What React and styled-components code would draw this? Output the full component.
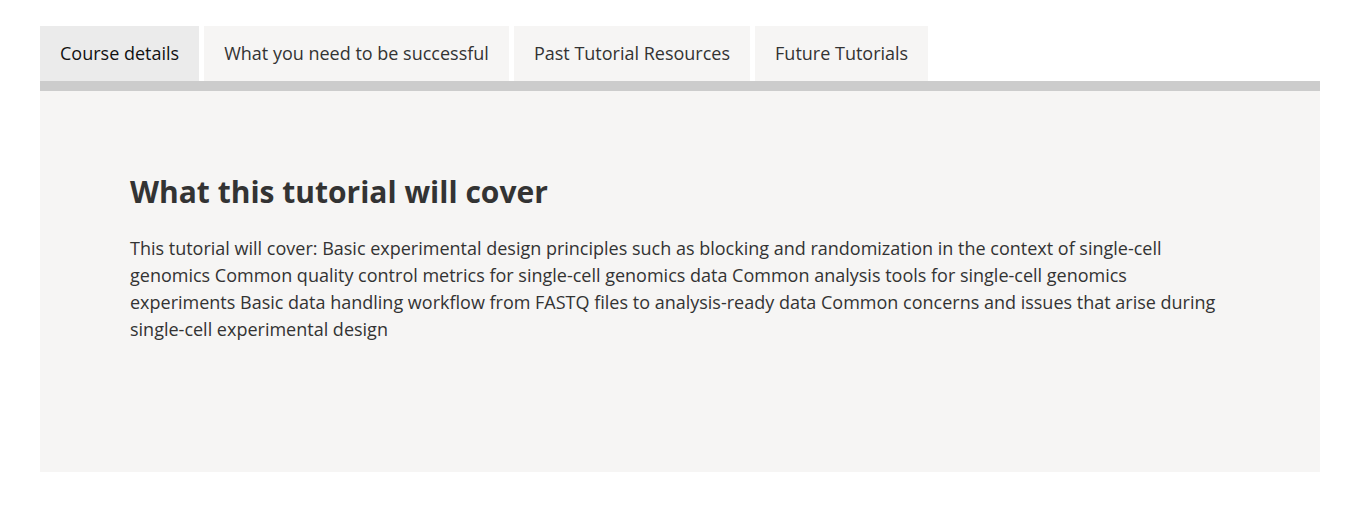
import React, { useState } from "react";
import styled, { createGlobalStyle } from "styled-components";

const Global = createGlobalStyle`
  html, body { margin: 0; padding: 0; background: #ffffff; }
  body { font-family: "Open Sans", "Noto Sans", sans-serif; color: #333; }
`;

const Wrap = styled.div`
  padding: 26px 42px 33px 40px;
`;

const TabList = styled.div`
  display: flex;
  gap: 5px;
  border-bottom: 10px solid #cccccc;
`;

const Tab = styled.button`
  border: none;
  margin: 0;
  height: 55px;
  padding: 0 20px 2px;
  font-family: "Open Sans", sans-serif;
  font-size: 18px;
  color: ${(p) => (p.$active ? "#111" : "#333")};
  background: ${(p) => (p.$active ? "#ebebeb" : "#f6f5f4")};
  cursor: pointer;
`;

const Panel = styled.div`
  background: #f6f5f4;
  height: 381px;
  box-sizing: border-box;
  padding: 81px 100px 0 90px;
`;

const Heading = styled.h2`
  margin: 0 0 23px;
  font-size: 30px;
  line-height: 40px;
  font-weight: 700;
  color: #333;
`;

const Body = styled.p`
  margin: 0;
  font-size: 18px;
  line-height: 27px;
  color: #333;
`;

const tabs = [
  "Course details",
  "What you need to be successful",
  "Past Tutorial Resources",
  "Future Tutorials",
];

export default function App() {
  const [active, setActive] = useState(0);
  return (
    <Wrap>
      <Global />
      <TabList>
        {tabs.map((t, i) => (
          <Tab key={t} $active={i === active} onClick={() => setActive(i)}>
            {t}
          </Tab>
        ))}
      </TabList>
      <Panel>
        <Heading>What this tutorial will cover</Heading>
        <Body>
          This tutorial will cover: Basic experimental design principles such as
          blocking and randomization in the context of single-cell genomics
          Common quality control metrics for single-cell genomics data Common
          analysis tools for single-cell genomics experiments Basic data handling
          workflow from FASTQ files to analysis-ready data Common concerns and
          issues that arise during single-cell experimental design
        </Body>
      </Panel>
    </Wrap>
  );
}
